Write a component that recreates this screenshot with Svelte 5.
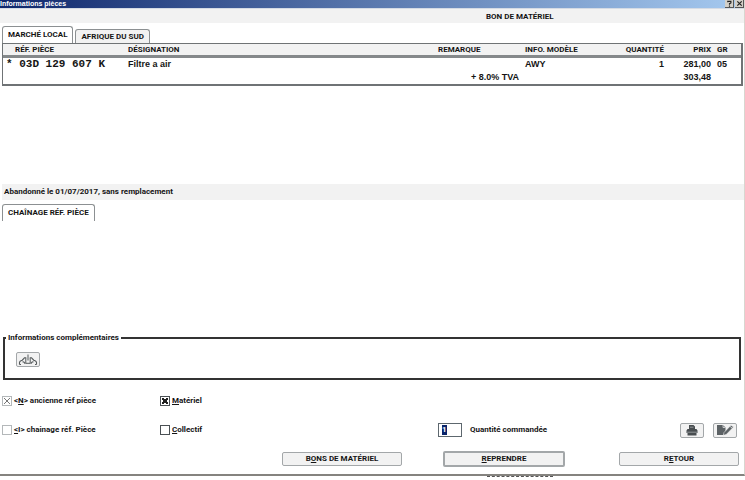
<script lang="ts">
  type Part = {
    ref: string;
    name: string;
    model: string;
    quantity: number;
    price: string;
    group: string;
  };

  const tabs = ['MARCHÉ LOCAL', 'AFRIQUE DU SUD'];

  const parts: Part[] = [
    { ref: '* 03D 129 607 K', name: 'Filtre a air', model: 'AWY', quantity: 1, price: '281,00', group: '05' },
  ];

  let activeTab = $state(0);
  let formerRef = $state(true);
  let chained = $state(false);
  let material = $state(true);
  let collective = $state(false);
  let ordered = $state('1');
</script>

<main class="window">
  <header class="titlebar">
    <h1 class="titlebar__text">Informations pièces</h1>
    <button class="titlebar__button" type="button" aria-label="Aide">
      <svg viewBox="0 0 8 8" width="7" height="7" fill="none" stroke="#222" stroke-width="1.3" aria-hidden="true">
        <path d="M2 2.6V1.6H5.6V3.4L4 4.2V5.4M4 6.4V7.6" />
      </svg>
    </button>
    <button class="titlebar__button" type="button" aria-label="Fermer">
      <svg viewBox="0 0 8 8" width="7" height="7" fill="none" stroke="#222" stroke-width="1.4" aria-hidden="true">
        <path d="M1.5 1.5L6.5 6.5M6.5 1.5L1.5 6.5" />
      </svg>
    </button>
  </header>

  <h2 class="band band--title">BON DE MATÉRIEL</h2>

  <div class="tabs" role="tablist">
    {#each tabs as tab, i}
      <button
        class="tab"
        class:tab--active={activeTab === i}
        type="button"
        role="tab"
        aria-selected={activeTab === i}
        onclick={() => (activeTab = i)}>{tab}</button>
    {/each}
  </div>

  <div class="parts">
    <table class="parts__table">
      <colgroup>
        <col class="col-ref" />
        <col />
        <col class="col-remark" />
        <col class="col-model" />
        <col class="col-quantity" />
        <col class="col-price" />
        <col class="col-group" />
      </colgroup>
      <thead>
        <tr>
          <th class="ref-head">RÉF. PIÈCE</th>
          <th>DÉSIGNATION</th>
          <th>REMARQUE</th>
          <th>INFO. MODÈLE</th>
          <th class="right">QUANTITÉ</th>
          <th class="right">PRIX</th>
          <th class="group">GR</th>
        </tr>
      </thead>
      <tbody>
        {#each parts as part}
          <tr>
            <td class="ref">{part.ref}</td>
            <td>{part.name}</td>
            <td></td>
            <td>{part.model}</td>
            <td class="right">{part.quantity}</td>
            <td class="right">{part.price}</td>
            <td class="group">{part.group}</td>
          </tr>
        {/each}
        <tr>
          <td></td>
          <td></td>
          <td class="tax">+ 8.0% TVA</td>
          <td></td>
          <td></td>
          <td class="right">303,48</td>
          <td></td>
        </tr>
      </tbody>
    </table>
  </div>

  <p class="band band--notice">Abandonné le 01/07/2017, sans remplacement</p>

  <div class="tabs tabs--chain" role="tablist">
    <button class="tab tab--active" type="button" role="tab" aria-selected="true">CHAÎNAGE RÉF. PIÈCE</button>
  </div>

  <fieldset class="extra">
    <legend>Informations complémentaires</legend>
    <button class="icon-button" type="button" aria-label="Véhicule">
      <svg viewBox="0 0 20 12" width="20" height="12" fill="none" stroke="#555a5c" stroke-width="1.1" aria-hidden="true">
        <path d="M1.5 10.5V8.5C1.5 7 3 6.8 4.2 6.2L6.5 3.8H8.3M1.5 10.5H3M4.5 8C6 7.6 7 8.6 7 10" />
        <path d="M18.5 10.5V8.5C18.5 7 17 6.8 15.8 6.2L13.5 3.8H11.7M18.5 10.5H17M15.5 8C14 7.6 13 8.6 13 10" />
        <path d="M7.8 4V9.3H12.2V4M10 0.5V6.5" stroke-width="1" />
      </svg>
    </button>
  </fieldset>

  <div class="options">
    <label class="check check--first">
      <input type="checkbox" bind:checked={formerRef} disabled />
      <span>&lt;<u>N</u>&gt; ancienne réf pièce</span>
    </label>
    <label class="check">
      <input type="checkbox" bind:checked={material} />
      <span><u>M</u>atériel</span>
    </label>
  </div>

  <div class="options">
    <label class="check check--first">
      <input type="checkbox" bind:checked={chained} disabled />
      <span><u>&lt;</u>I&gt; chainage réf. Pièce</span>
    </label>
    <label class="check check--second">
      <input type="checkbox" bind:checked={collective} />
      <span><u>C</u>ollectif</span>
    </label>
    <div class="order">
      <span class="order__box">
        <span class="order__selection"><input id="ordered" type="text" bind:value={ordered} /></span>
      </span>
      <label for="ordered">Quantité commandée</label>
    </div>
    <div class="tools">
      <button class="icon-button" type="button" aria-label="Imprimer">
        <svg viewBox="0 0 20 12" width="20" height="12" fill="#484d50" aria-hidden="true">
          <path d="M7 1H11.5L13 2.5V5H14.5L15.5 6.5V9H4.5V6.5L5.5 5H7Z" />
          <path d="M5.5 9H14.5V11.5H5.5Z" />
          <path d="M8 3.2H11.5M5 8.2H15" stroke="#c5c8c9" stroke-width="0.6" />
        </svg>
      </button>
      <button class="icon-button" type="button" aria-label="Modifier">
        <svg viewBox="0 0 20 12" width="20" height="12" fill="#5c6265" aria-hidden="true">
          <path d="M2 1H8L10.5 3.5V11H2Z" />
          <path d="M8 1V3.5H10.5" fill="none" stroke="#f2f2f2" stroke-width="0.7" />
          <path d="M9 8.5L16 1.2L18.5 3L11.5 10.3L8.3 11.3Z" stroke="#f2f2f2" stroke-width="0.6" />
          <path d="M15 2.4L17.4 4.2" stroke="#f2f2f2" stroke-width="0.7" />
        </svg>
      </button>
    </div>
  </div>

  <div class="actions">
    <button class="action" type="button">B<u>O</u>NS DE MATÉRIEL</button>
    <button class="action action--default" type="button"><u>R</u>EPRENDRE</button>
    <button class="action" type="button">R<u>E</u>TOUR</button>
  </div>
</main>
<div class="behind"></div>

<style>
  :global(body) {
    margin: 0;
    background: #fff;
  }

  .window {
    box-sizing: border-box;
    overflow: hidden;
    border-right: 1px solid #d8d6d0;
    border-bottom: 2px solid #85837f;
    background: #fff;
    color: #151515;
    font-family: Roboto, 'Liberation Sans', Arial, sans-serif;
    font-size: 8px;
    font-weight: bold;
    line-height: 12px;
  }

  /* What shows of the page under the window's lower edge */
  .behind {
    width: 66px;
    margin-left: 487px;
    border-top: 1px dashed #555;
  }

  button,
  input {
    box-sizing: border-box;
    margin: 0;
    padding: 0;
    color: inherit;
    font: inherit;
  }

  .titlebar {
    display: flex;
    align-items: center;
    gap: 1px;
    height: 8px;
    border-bottom: 1px solid #d5dbe4;
    background: linear-gradient(to right, #0e276c, #a6caf0);
  }

  .titlebar__text {
    flex: 1;
    margin: 0;
    color: #fff;
    font-family: 'Liberation Sans', Arial, sans-serif;
    font-size: 7px;
    line-height: 8px;
  }

  .titlebar__button {
    display: flex;
    align-items: center;
    justify-content: center;
    width: 9px;
    height: 8px;
    border: 0;
    border-right: 1px solid #555;
    border-bottom: 1px solid #555;
    background: #d4d0c8;
  }

  .band {
    margin: 0;
    background: #f2f2f2;
    font-size: 8px;
  }

  .band--title {
    padding: 2px 0 0 486px;
  }

  .band--notice {
    margin: 98px 0 0 2px;
    padding: 2px;
  }

  .tabs {
    display: flex;
    align-items: flex-end;
    gap: 2px;
    padding: 3px 2px 0;
  }

  .tab {
    height: 14px;
    padding: 0 5px;
    border: 1px solid #8c9092;
    border-bottom: 0;
    border-radius: 3px 3px 0 0;
    background: #f2f2f2;
  }

  .tab--active {
    height: 17px;
    background: #fff;
  }

  .tabs--chain {
    padding-top: 4px;
  }

  .parts {
    margin: 0 1px 0 2px;
    border: 1px solid #6f7375;
    border-right-width: 2px;
    border-bottom-width: 2px;
  }

  .parts__table {
    width: 100%;
    border-collapse: collapse;
    table-layout: fixed;
  }

  .col-ref {
    width: 125px;
  }

  .col-remark {
    width: 87px;
  }

  .col-model {
    width: 65px;
  }

  .col-quantity {
    width: 74px;
  }

  .col-price {
    width: 47px;
  }

  .col-group {
    width: 30px;
  }

  th {
    height: 11px;
    padding: 0;
    border-bottom: 3px solid #85898b;
    background: #f2f2f2;
    line-height: 11px;
    text-align: left;
    white-space: nowrap;
  }

  td {
    height: 13px;
    padding: 0;
    font-family: 'Liberation Sans', Arial, sans-serif;
    font-size: 9px;
    line-height: 13px;
    white-space: nowrap;
  }

  .ref-head {
    padding-left: 12px;
  }

  .ref {
    padding-left: 3px;
    font-family: 'Liberation Mono', 'Courier New', monospace;
    font-size: 11px;
  }

  .right {
    text-align: right;
  }

  .group {
    padding-left: 6px;
  }

  .tax {
    padding-right: 6px;
    text-align: right;
  }

  .extra {
    margin: 111px 3px 0;
    padding: 8px 11px 11px;
    border: 2px solid #333;
  }

  .extra legend {
    margin-left: -10px;
    padding: 0 2px;
  }

  .icon-button {
    display: flex;
    align-items: center;
    justify-content: center;
    width: 24px;
    height: 15px;
    border: 1px solid #a3a7a9;
    border-radius: 2px;
    background: #f2f2f2;
  }

  .options {
    display: flex;
    align-items: center;
    height: 16px;
    margin-top: 13px;
    padding: 0 7px 0 2px;
  }

  .check {
    display: flex;
    align-items: center;
    gap: 2px;
  }

  .check--first {
    width: 158px;
  }

  .check--second {
    width: 278px;
  }

  .check input {
    width: 10px;
    height: 10px;
    appearance: none;
    border: 1px solid #4a5054;
    background-color: #fff;
  }

  .check input:checked {
    background-image:
      linear-gradient(45deg, transparent 40%, #222 40% 60%, transparent 60%),
      linear-gradient(-45deg, transparent 40%, #222 40% 60%, transparent 60%);
    background-position: center;
    background-repeat: no-repeat;
    background-size: 6px 6px;
  }

  .check input:disabled {
    border-color: #b4b8ba;
  }

  .check input:disabled:checked {
    background-image:
      linear-gradient(45deg, transparent 43%, #777 43% 57%, transparent 57%),
      linear-gradient(-45deg, transparent 43%, #777 43% 57%, transparent 57%);
  }

  .order {
    display: flex;
    align-items: center;
    gap: 8px;
  }

  .order__box {
    box-sizing: border-box;
    width: 24px;
    height: 14px;
    padding: 1px 3px;
    border: 1px solid #5d676e;
  }

  .order__selection {
    display: block;
    width: 5px;
    height: 10px;
    background: #0a246a;
  }

  .order input {
    display: block;
    width: 5px;
    height: 10px;
    border: 0;
    outline: 0;
    background: none;
    color: #fff;
    line-height: 10px;
  }

  .tools {
    display: flex;
    gap: 9px;
    margin-left: auto;
  }

  .actions {
    display: flex;
    align-items: center;
    justify-content: flex-end;
    height: 16px;
    margin-top: 13px;
    padding: 0 5px 7px 0;
  }

  .action {
    width: 120px;
    height: 14px;
    border: 1px solid #a3a7a9;
    border-radius: 2px;
    background: #f2f2f2;
    line-height: 12px;
  }

  .action--default {
    width: 122px;
    height: 16px;
    margin: 0 54px 0 41px;
    border: 2px solid #a3a7a9;
  }
</style>
